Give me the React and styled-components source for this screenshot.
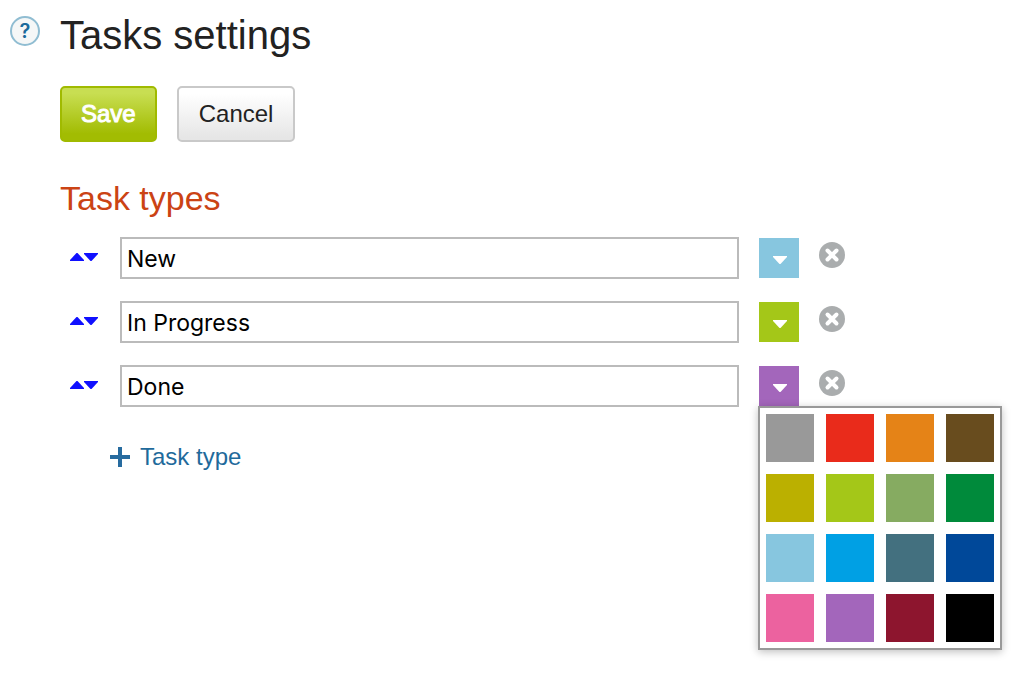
import React, { useState } from "react";
import styled, { createGlobalStyle } from "styled-components";

const GlobalStyle = createGlobalStyle`
  *, *::before, *::after { box-sizing: border-box; }
  body {
    margin: 0;
    background: #fff;
    color: #222;
    font: 24px/28px "Liberation Sans", Arial, sans-serif;
  }
`;

const Page = styled.main`
  display: flex;
  align-items: flex-start;
  gap: 20px;
  min-height: 100vh;
  padding: 12px 183px 28px 10px;
`;

const HelpButton = styled.button`
  flex: none;
  width: 30px;
  height: 30px;
  margin-top: 4px;
  padding: 0;
  border: 2px solid #90bdd2;
  border-radius: 50%;
  background: #f5f7f7;
  color: #1b6a9c;
  font: 600 20px/26px Inter, sans-serif;
  text-align: center;
  cursor: pointer;
`;

const Content = styled.form`
  flex: 1;
  min-width: 0;
`;

const Title = styled.h1`
  margin: 0;
  font-size: 40px;
  line-height: 46px;
  font-weight: 400;
`;

const Actions = styled.div`
  display: flex;
  gap: 20px;
  margin-top: 28px;
`;

const Button = styled.button`
  height: 56px;
  padding: 0 ${(p) => (p.$primary ? "19px" : "20px")};
  border: 2px solid ${(p) => (p.$primary ? "#a0ba00" : "#c9c9c9")};
  border-radius: 5px;
  background: ${(p) =>
    p.$primary
      ? "linear-gradient(#c8de52 10%, #a2bc02 88%)"
      : "linear-gradient(#fff 10%, #e6e6e6 95%)"};
  color: ${(p) => (p.$primary ? "#fff" : "#222")};
  font: inherit;
  -webkit-text-stroke: ${(p) => (p.$primary ? "1px #fff" : "0")};
  cursor: pointer;
`;

const SectionTitle = styled.h2`
  margin: 36px 0 19px;
  color: #cb4314;
  font-size: 34px;
  line-height: 40px;
  font-weight: 400;
`;

const TypeList = styled.ul`
  display: flex;
  flex-direction: column;
  gap: 22px;
  margin: 0;
  padding: 0;
  list-style: none;
`;

const TypeRow = styled.li`
  display: flex;
  align-items: center;
  gap: 20px;
  height: 42px;
  padding-left: 10px;
`;

const Sorter = styled.div`
  display: flex;
  flex: none;
  width: 30px;
  padding-bottom: 2px;
`;

const SortButton = styled.button`
  display: flex;
  padding: 0;
  border: 0;
  background: none;
  color: #1010ff;
  cursor: pointer;
`;

const NameInput = styled.input`
  flex: 1;
  min-width: 0;
  height: 42px;
  padding: 2px 5px 0;
  border: 2px solid #bbb;
  border-radius: 0;
  outline: 0;
  background: #fff;
  color: #000;
  font: 23px/28px Inter, sans-serif;
`;

const ColorPicker = styled.div`
  position: relative;
  flex: none;
`;

const ColorButton = styled.button`
  display: flex;
  align-items: center;
  justify-content: center;
  width: 40px;
  height: 40px;
  padding: 4px 0 0 2px;
  border: 0;
  background: ${(p) => p.$color};
  color: #fff;
  cursor: pointer;
`;

const Palette = styled.div`
  position: absolute;
  top: 100%;
  left: -1px;
  z-index: 1;
  display: grid;
  grid-template-columns: repeat(4, 48px);
  gap: 12px;
  padding: 6px;
  border: 2px solid #999;
  background: #fff;
  box-shadow: 0 2px 8px rgba(0, 0, 0, 0.25);
`;

const Swatch = styled.button`
  height: 48px;
  padding: 0;
  border: 0;
  background: ${(p) => p.$color};
  cursor: pointer;
`;

const RemoveButton = styled.button`
  display: flex;
  flex: none;
  padding: 0 0 6px;
  border: 0;
  background: none;
  cursor: pointer;
`;

const AddButton = styled.button`
  display: flex;
  align-items: center;
  gap: 10px;
  margin: 36px 0 0 50px;
  padding: 0;
  border: 0;
  background: none;
  color: #1f6a9b;
  font: inherit;
  cursor: pointer;
`;

const PALETTE = [
  ["Grey", "#999999"],
  ["Red", "#e92b1b"],
  ["Orange", "#e58317"],
  ["Brown", "#684c1e"],
  ["Mustard", "#bbb000"],
  ["Lime", "#a4c718"],
  ["Sage", "#86ab61"],
  ["Green", "#008a3b"],
  ["Sky", "#87c6df"],
  ["Azure", "#00a0e4"],
  ["Slate", "#43707f"],
  ["Navy", "#004899"],
  ["Pink", "#ec629f"],
  ["Purple", "#a366bb"],
  ["Crimson", "#8d152e"],
  ["Black", "#000000"],
];

const INITIAL_TYPES = [
  { id: 1, name: "New", color: "#87c6df" },
  { id: 2, name: "In Progress", color: "#a4c718" },
  { id: 3, name: "Done", color: "#a366bb" },
];

const Triangle = ({ up }) => (
  <svg width="14" height="8" viewBox="0 0 14 8" aria-hidden="true">
    <path d={up ? "M0 8V7L6.5 0H7.5L14 7V8Z" : "M0 0V1L6.5 8H7.5L14 1V0Z"} fill="currentColor" />
  </svg>
);

const RemoveIcon = () => (
  <svg width="26" height="26" viewBox="0 0 26 26" aria-hidden="true">
    <circle cx="13" cy="13" r="13" fill="#aaadae" />
    <path d="M8.5 8.5L17.5 17.5M17.5 8.5L8.5 17.5" stroke="#fff" strokeWidth="4" strokeLinecap="round" />
  </svg>
);

const PlusIcon = () => (
  <svg width="20" height="20" viewBox="0 0 20 20" aria-hidden="true">
    <path d="M10 0V20M0 10H20" stroke="#276b9f" strokeWidth="4" />
  </svg>
);

export default function App() {
  const [types, setTypes] = useState(INITIAL_TYPES);
  const [openId, setOpenId] = useState(3);

  const update = (id, change) =>
    setTypes((list) => list.map((t) => (t.id === id ? { ...t, ...change } : t)));

  const move = (index, step) =>
    setTypes((list) => {
      const target = index + step;
      if (target < 0 || target >= list.length) return list;
      const next = [...list];
      [next[index], next[target]] = [next[target], next[index]];
      return next;
    });

  const add = () =>
    setTypes((list) => [...list, { id: Date.now(), name: "", color: "#999999" }]);

  return (
    <>
      <GlobalStyle />
      <Page>
        <HelpButton type="button" aria-label="Help">?</HelpButton>
        <Content onSubmit={(e) => e.preventDefault()}>
          <Title>Tasks settings</Title>
          <Actions>
            <Button type="submit" $primary>Save</Button>
            <Button type="button">Cancel</Button>
          </Actions>
          <SectionTitle>Task types</SectionTitle>
          <TypeList>
            {types.map((type, index) => (
              <TypeRow key={type.id}>
                <Sorter>
                  <SortButton type="button" aria-label="Move up" onClick={() => move(index, -1)}>
                    <Triangle up />
                  </SortButton>
                  <SortButton type="button" aria-label="Move down" onClick={() => move(index, 1)}>
                    <Triangle />
                  </SortButton>
                </Sorter>
                <NameInput
                  aria-label="Task type name"
                  value={type.name}
                  onChange={(e) => update(type.id, { name: e.target.value })}
                />
                <ColorPicker>
                  <ColorButton
                    type="button"
                    aria-label="Choose color"
                    aria-expanded={openId === type.id}
                    $color={type.color}
                    onClick={() => setOpenId(openId === type.id ? null : type.id)}
                  >
                    <Triangle />
                  </ColorButton>
                  {openId === type.id && (
                    <Palette>
                      {PALETTE.map(([name, color]) => (
                        <Swatch
                          key={color}
                          type="button"
                          aria-label={name}
                          $color={color}
                          onClick={() => {
                            update(type.id, { color });
                            setOpenId(null);
                          }}
                        />
                      ))}
                    </Palette>
                  )}
                </ColorPicker>
                <RemoveButton
                  type="button"
                  aria-label="Remove task type"
                  onClick={() => setTypes((list) => list.filter((t) => t.id !== type.id))}
                >
                  <RemoveIcon />
                </RemoveButton>
              </TypeRow>
            ))}
          </TypeList>
          <AddButton type="button" onClick={add}>
            <PlusIcon />
            Task type
          </AddButton>
        </Content>
      </Page>
    </>
  );
}
